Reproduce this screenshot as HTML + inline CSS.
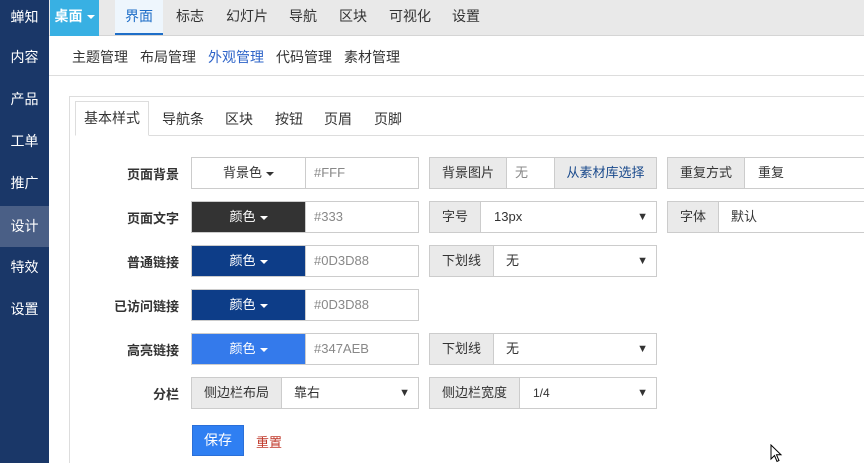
<!DOCTYPE html>
<html style="width:864px;height:463px;overflow:hidden"><head><meta charset="utf-8"><style>
*{box-sizing:border-box;margin:0;padding:0}
body{width:864px;height:463px;overflow:hidden;background:#fff;font-family:"Liberation Sans","Noto Sans CJK SC",sans-serif;font-size:13px;color:#333;position:relative}
.side{position:absolute;left:0;top:0;width:49px;height:463px;background:#1a3768}
.side div{position:absolute;left:0;width:49px;height:41px;line-height:41px;text-align:center;color:#fff;font-size:14px}
.side .on{background:#4a5f86}
.top{position:absolute;left:49px;top:0;right:0;height:36px;background:#e9e9e9;border-bottom:1px solid #d5d5d5}
.top span{position:absolute;top:0;height:35px;line-height:33px;font-size:14px;color:#333}
.sub{position:absolute;left:49px;top:36px;right:0;height:40px;border-bottom:1px solid #ddd}
.sub span{position:absolute;top:11px;font-size:14px;color:#333}
.panel{position:absolute;left:69px;top:96px;width:820px;height:380px;border:1px solid #ddd}
.tabs{position:absolute;left:75px;top:101px;right:0;height:35px;border-bottom:1px solid #ddd}
.tabs span{position:absolute;top:8px;font-size:14px}
.tabs .act{top:0;left:0;width:74px;height:35px;border:1px solid #ddd;border-bottom-color:#fff;background:#fff;text-align:center;line-height:33px}
.lbl{position:absolute;width:110px;text-align:right;font-weight:bold;font-size:13px;left:69px}
.box{position:absolute;height:32px;border:1px solid #ccc;line-height:30px}
.add{background:#eaeaea;color:#333;text-align:center;border-right:1px solid #ccc;position:absolute;top:0;bottom:0}
.caret{display:inline-block;border-left:4px solid transparent;border-right:4px solid transparent;border-top:4px solid currentColor;vertical-align:middle;margin-left:4px}
.sel{position:absolute;font-size:11px;right:8px;top:0}
.ph{color:#888;position:absolute;left:8px}
</style></head><body>
<div class="side">
<div style="top:-3px">蝉知</div><div style="top:37px">内容</div><div style="top:79px">产品</div><div style="top:121px">工单</div><div style="top:163px">推广</div><div class="on" style="top:206px">设计</div><div style="top:247px">特效</div><div style="top:289px">设置</div>
</div>
<div class="top">
<span style="left:1px;width:49px;background:#38b0e3;color:#fff;height:36px;text-align:center;font-weight:bold">桌面<i class="caret" style="color:#fff"></i></span>
<span style="left:66px;width:48px;background:#eef6fd;color:#1e6ec8;text-align:center;border-bottom:2px solid #1e6ec8">界面</span>
<span style="left:127px">标志</span><span style="left:177px">幻灯片</span><span style="left:240px">导航</span><span style="left:290px">区块</span><span style="left:340px">可视化</span><span style="left:403px">设置</span>
</div>
<div class="sub"><span style="left:23px">主题管理</span><span style="left:91px">布局管理</span><span style="left:159px;color:#2e64c8">外观管理</span><span style="left:227px">代码管理</span><span style="left:295px">素材管理</span></div>
<div class="panel"></div>
<div class="tabs"><span class="act">基本样式</span><span style="left:87px">导航条</span><span style="left:150px">区块</span><span style="left:200px">按钮</span><span style="left:249px">页眉</span><span style="left:299px">页脚</span></div>

<div class="lbl" style="top:164px">页面背景</div>
<div class="box" style="left:191px;top:157px;width:228px"><div class="add" style="left:0;width:114px;background:#fff">背景色<i class="caret"></i></div><span class="ph" style="left:122px">#FFF</span></div>
<div class="box" style="left:429px;top:157px;width:228px"><div class="add" style="left:0;width:77px">背景图片</div><span class="ph" style="left:85px">无</span><div class="add" style="left:124px;width:102px;border-left:1px solid #ccc;border-right:0;color:#1a4a8c">从素材库选择</div></div>
<div class="box" style="left:667px;top:157px;width:220px"><div class="add" style="left:0;width:77px">重复方式</div><span style="position:absolute;left:90px">重复</span></div>

<div class="lbl" style="top:208px">页面文字</div>
<div class="box" style="left:191px;top:201px;width:228px"><div class="add" style="left:0;width:114px;background:#333;color:#fff">颜色<i class="caret"></i></div><span class="ph" style="left:122px">#333</span></div>
<div class="box" style="left:429px;top:201px;width:228px"><div class="add" style="left:0;width:51px">字号</div><span style="position:absolute;left:64px">13px</span><span class="sel">▼</span></div>
<div class="box" style="left:667px;top:201px;width:220px"><div class="add" style="left:0;width:51px">字体</div><span style="position:absolute;left:63px">默认</span></div>

<div class="lbl" style="top:252px">普通链接</div>
<div class="box" style="left:191px;top:245px;width:228px"><div class="add" style="left:0;width:114px;background:#0d3d88;color:#fff">颜色<i class="caret"></i></div><span class="ph" style="left:122px">#0D3D88</span></div>
<div class="box" style="left:429px;top:245px;width:228px"><div class="add" style="left:0;width:64px">下划线</div><span style="position:absolute;left:76px">无</span><span class="sel">▼</span></div>

<div class="lbl" style="top:296px">已访问链接</div>
<div class="box" style="left:191px;top:289px;width:228px"><div class="add" style="left:0;width:114px;background:#0d3d88;color:#fff">颜色<i class="caret"></i></div><span class="ph" style="left:122px">#0D3D88</span></div>

<div class="lbl" style="top:340px">高亮链接</div>
<div class="box" style="left:191px;top:333px;width:228px"><div class="add" style="left:0;width:114px;background:#347aeb;color:#fff">颜色<i class="caret"></i></div><span class="ph" style="left:122px">#347AEB</span></div>
<div class="box" style="left:429px;top:333px;width:228px"><div class="add" style="left:0;width:64px">下划线</div><span style="position:absolute;left:76px">无</span><span class="sel">▼</span></div>

<div class="lbl" style="top:384px">分栏</div>
<div class="box" style="left:191px;top:377px;width:228px"><div class="add" style="left:0;width:90px">侧边栏布局</div><span style="position:absolute;left:102px">靠右</span><span class="sel">▼</span></div>
<div class="box" style="left:429px;top:377px;width:228px"><div class="add" style="left:0;width:90px">侧边栏宽度</div><span style="position:absolute;left:103px;font-size:12px">1/4</span><span class="sel">▼</span></div>

<div style="position:absolute;left:192px;top:425px;width:52px;height:31px;background:#2f7ff2;border:1px solid #2a6fd8;color:#fff;text-align:center;line-height:29px;font-size:14px">保存</div>
<div style="position:absolute;left:256px;top:432px;color:#c0392b;font-size:13px">重置</div>
<svg style="position:absolute;left:770px;top:444px" width="14" height="19" viewBox="0 0 14 19"><path d="M1 1 L1 15 L4.5 11.5 L7 17.5 L9 16.5 L6.5 10.8 L11 10.8 Z" fill="#fff" stroke="#000" stroke-width="1"/></svg>
</body></html>
